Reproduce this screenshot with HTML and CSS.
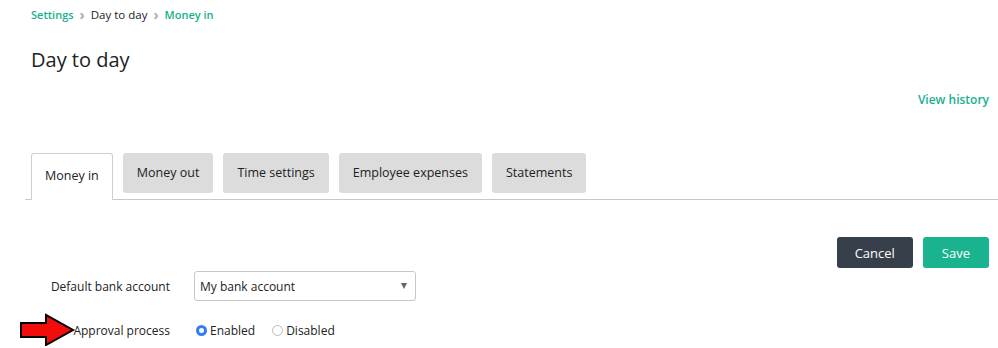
FILE: index.html
```html
<!DOCTYPE html>
<html lang="en">
<head>
  <meta charset="UTF-8">
  <title>Day to day</title>
  <link rel="stylesheet" href="styles.css">
</head>
<body>
  <div class="page">
    <nav class="crumbs">
      <a href="#">Settings</a>
      <span class="sep">&#8250;</span>
      <span class="here">Day to day</span>
      <span class="sep">&#8250;</span>
      <a href="#">Money in</a>
    </nav>

    <h1>Day to day</h1>

    <div class="history"><a href="#">View history</a></div>

    <div class="tabs">
      <div class="tab active">Money in</div>
      <div class="tab">Money out</div>
      <div class="tab">Time settings</div>
      <div class="tab">Employee expenses</div>
      <div class="tab">Statements</div>
    </div>

    <div class="actions">
      <button class="btn cancel">Cancel</button>
      <button class="btn save">Save</button>
    </div>

    <div class="form">
      <div class="row">
        <label class="lbl">Default bank account</label>
        <div class="select">
          <span>My bank account</span>
          <span class="caret"></span>
        </div>
      </div>
      <div class="row radios">
        <svg class="arrow" width="57" height="34" viewBox="0 0 57 34">
          <polygon points="2,10 27,10 27,2 54,17 27,32 27,24 2,24" fill="#f20d0d" stroke="#000" stroke-width="2" stroke-linejoin="miter"/>
        </svg>
        <label class="lbl">Approval process</label>
        <label class="opt"><span class="radio on"></span>Enabled</label>
        <label class="opt"><span class="radio"></span>Disabled</label>
      </div>
    </div>
  </div>
</body>
</html>
```

FILE: styles.css
```css
body { margin: 0; font-family: "Open Sans", "Liberation Sans", sans-serif; color: #222; background: #fff; }
a { color: #1aae8e; text-decoration: none; font-weight: 600; }

.page { padding-left: 25px; position: relative; }

.crumbs { padding: 5px 0 0 6px; font-size: 11px; line-height: 20px; display: flex; align-items: center; gap: 6px; }
.crumbs .here { color: #222; font-size: 11.5px; }
.crumbs .sep { color: #aaa; font-size: 14px; font-weight: 700; }

h1 { margin: 21px 0 0 6px; font-size: 20px; font-weight: 400; line-height: 28px; color: #222; }

.history { text-align: right; padding-right: 9px; margin-top: 17px; font-size: 12px; line-height: 18px; }

.tabs { display: flex; align-items: flex-start; gap: 10px; margin-top: 44px; padding-left: 6px; border-bottom: 1px solid #c8c8c8; height: 46px; }
.tab { background: #dcdcdc; border-radius: 3px; font-size: 12.5px; line-height: 40px; padding: 0 14px; color: #222; }
.tab.active { background: #fff; border: 1px solid #cfcfcf; border-bottom: none; border-radius: 3px 3px 0 0; line-height: 44px; height: 46px; padding: 0 13px; }

.actions { display: flex; justify-content: flex-end; gap: 10px; padding-right: 9px; margin-top: 37px; }
.btn { border: none; border-radius: 3px; font-family: inherit; font-size: 13px; height: 31px; padding: 0 18px; color: #fff; }
.btn.cancel { background: #37404a; }
.btn.save { background: #1ab38f; padding: 0 19px; }

.form { margin-top: 3px; }
.row { display: flex; align-items: center; gap: 24px; }
.lbl { width: 145px; text-align: right; font-size: 12px; color: #222; }
.select { width: 207px; height: 28px; border: 1px solid #c8c8c8; border-radius: 3px; display: flex; align-items: center; justify-content: space-between; padding: 0 8px 0 5px; font-size: 12px; }
.caret { width: 0; height: 0; border-left: 3px solid transparent; border-right: 3px solid transparent; border-top: 6px solid #666; }

.radios { margin-top: 13px; height: 32px; position: relative; }
.radios .lbl { margin-right: 2px; }
.opt { display: flex; align-items: center; gap: 3px; font-size: 12px; margin-right: -7px; }
.radio { width: 9px; height: 9px; border: 1px solid #bbb; border-radius: 50%; background: #fff; }
.radio.on { border: 3px solid #2f7df6; width: 5px; height: 5px; }

.arrow { position: absolute; left: -6px; top: -1px; }
```
